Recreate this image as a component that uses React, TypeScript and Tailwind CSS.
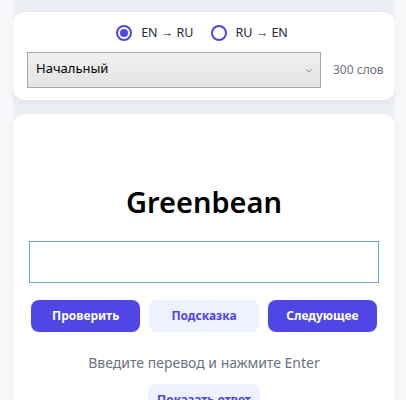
import { ChevronDown } from 'lucide-react';

const font = { fontFamily: '"Noto Sans", "Open Sans", sans-serif' };

function Radio({ label, checked }: { label: string; checked?: boolean }) {
  return (
    <label className="flex items-center gap-[9px] text-[12.5px] text-gray-800">
      <span className="w-4 h-4 rounded-full border-2 border-[#4f46e5] flex items-center justify-center">
        {checked && <span className="w-2 h-2 rounded-full bg-[#4f46e5]" />}
      </span>
      {label}
    </label>
  );
}

export default function App() {
  return (
    <div className="h-[400px] overflow-hidden bg-[#f7f8fa]" style={font}>
      <div className="ml-[13px] w-[382px] h-full bg-[#eceff4] pt-3 flex flex-col gap-[14px]">
        <section className="bg-white rounded-xl shadow-[0_2px_8px_rgba(30,40,80,0.06)] px-[14px] pt-[13px] pb-3">
          <div className="h-4 flex items-center justify-center gap-[17px] pr-[4px]">
            <Radio label="EN → RU" checked />
            <Radio label="RU → EN" />
          </div>
          <div className="mt-[11px] flex items-center gap-3">
            <div className="w-[294px] shrink-0 h-9 border border-[#a9a9a9] bg-gradient-to-b from-[#f0f0f0] to-[#e3e3e3] flex items-start justify-between pl-2 pr-[6px] pt-[6px]">
              <span className="text-[13px] text-black leading-[18px]">Начальный</span>
              <ChevronDown size={10} className="mt-[7px] text-gray-500" strokeWidth={2} />
            </div>
            <span className="whitespace-nowrap text-[12px] text-gray-500">300 слов</span>
          </div>
        </section>

        <section className="flex-1 bg-white rounded-xl shadow-[0_2px_8px_rgba(30,40,80,0.06)] px-4 pt-[68px] flex flex-col">
          <h1 className="text-center text-[29px] font-semibold leading-10 text-black">Greenbean</h1>
          <input className="mt-[19px] h-[42px] w-full border border-[#6fa3d8] outline-none px-2 text-base" />
          <div className="mt-[17px] px-[2px] flex gap-[9px]">
            <button className="flex-1 h-8 rounded-lg bg-[#4f46e5] text-white text-[12px] font-bold">Проверить</button>
            <button className="flex-1 h-8 rounded-lg bg-[#eef2ff] text-[#4f46e5] text-[12px] font-bold">Подсказка</button>
            <button className="flex-1 h-8 rounded-lg bg-[#4f46e5] text-white text-[12px] font-bold">Следующее</button>
          </div>
          <p className="mt-[21px] text-center text-[14px] leading-5 text-gray-500">Введите перевод и нажмите Enter</p>
          <div className="mt-[11px] flex justify-center">
            <button className="w-[112px] h-8 rounded-lg bg-[#eef2ff] text-[#4f46e5] text-[12px] font-bold">Показать ответ</button>
          </div>
        </section>
      </div>
    </div>
  );
}
